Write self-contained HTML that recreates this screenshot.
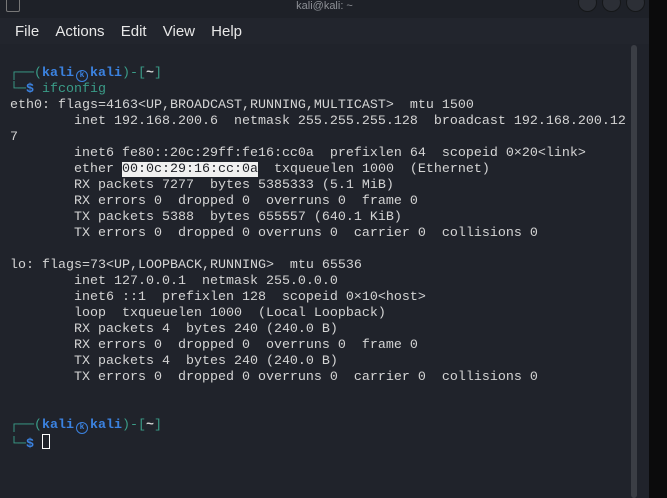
<!DOCTYPE html>
<html><head><style>
body{margin:0;width:667px;height:498px;overflow:hidden;background:#0b0b0c;font-family:"Liberation Sans",sans-serif;position:relative}
#win{position:absolute;left:0;top:0;width:649px;height:498px;background:#20232b}
#title{position:absolute;left:0;top:0;width:649px;height:18px;background:#1e2128;color:#8d9096;font-size:11px;text-align:center;line-height:12px}
.btn{position:absolute;top:-7px;width:17px;height:17px;border-radius:50%;background:#2c2f36;border:1px solid #151719}
#menu{position:absolute;left:0;top:18px;width:649px;height:26px;background:#22252d;color:#e8e8e8;font-size:15px;line-height:28px}
#menu span{margin-left:15px;margin-right:-3px}
#term{position:absolute;left:10px;top:66px;font-family:"Liberation Mono",monospace;font-size:13.33px;line-height:16px;color:#d4d4d4;white-space:pre}
.t{color:#3a9c88}.b{color:#3b82e0;font-weight:bold}
.sk{display:inline-block;width:12px;height:12px;border:1.5px solid #3b82e0;border-radius:50%;box-sizing:border-box;vertical-align:-1px;margin:0 2px;font-size:8px;line-height:9px;text-align:center}
.hl{background:#f0f0f0;color:#1d1f25}
#sb{position:absolute;left:631px;top:45px;width:6px;height:453px;background:#3b3e45;border-radius:3px}
.cur{display:inline-block;width:6px;height:13px;border:1px solid #fff;vertical-align:-2px}
</style></head><body>
<div id="win">
<div id="title"><div style="position:absolute;left:6px;top:0;width:12px;height:11px;border:1px solid #777;border-top:none;border-radius:0 0 2px 2px"></div>kali@kali: ~
<div class="btn" style="left:578px"></div><div class="btn" style="left:602px"></div><div class="btn" style="left:626px"></div></div>
<div id="menu"><span>File</span> <span>Actions</span> <span>Edit</span> <span>View</span> <span>Help</span></div>
<div id="sb"></div>
<div id="term"><span class="t">┌──(</span><span class="b">kali<span class="sk">k</span>kali</span><span class="t">)-[</span><b>~</b><span class="t">]</span>
<span class="t">└─</span><span class="b">$</span> <span class="t">ifconfig</span>
eth0: flags=4163&lt;UP,BROADCAST,RUNNING,MULTICAST&gt;  mtu 1500
        inet 192.168.200.6  netmask 255.255.255.128  broadcast 192.168.200.12
7
        inet6 fe80::20c:29ff:fe16:cc0a  prefixlen 64  scopeid 0×20&lt;link&gt;
        ether <span class="hl">00:0c:29:16:cc:0a</span>  txqueuelen 1000  (Ethernet)
        RX packets 7277  bytes 5385333 (5.1 MiB)
        RX errors 0  dropped 0  overruns 0  frame 0
        TX packets 5388  bytes 655557 (640.1 KiB)
        TX errors 0  dropped 0 overruns 0  carrier 0  collisions 0

lo: flags=73&lt;UP,LOOPBACK,RUNNING&gt;  mtu 65536
        inet 127.0.0.1  netmask 255.0.0.0
        inet6 ::1  prefixlen 128  scopeid 0×10&lt;host&gt;
        loop  txqueuelen 1000  (Local Loopback)
        RX packets 4  bytes 240 (240.0 B)
        RX errors 0  dropped 0  overruns 0  frame 0
        TX packets 4  bytes 240 (240.0 B)
        TX errors 0  dropped 0 overruns 0  carrier 0  collisions 0


<span class="t">┌──(</span><span class="b">kali<span class="sk">k</span>kali</span><span class="t">)-[</span><b>~</b><span class="t">]</span>
<span class="t">└─</span><span class="b">$</span> <span class="cur"></span></div>
</div>
</body></html>
